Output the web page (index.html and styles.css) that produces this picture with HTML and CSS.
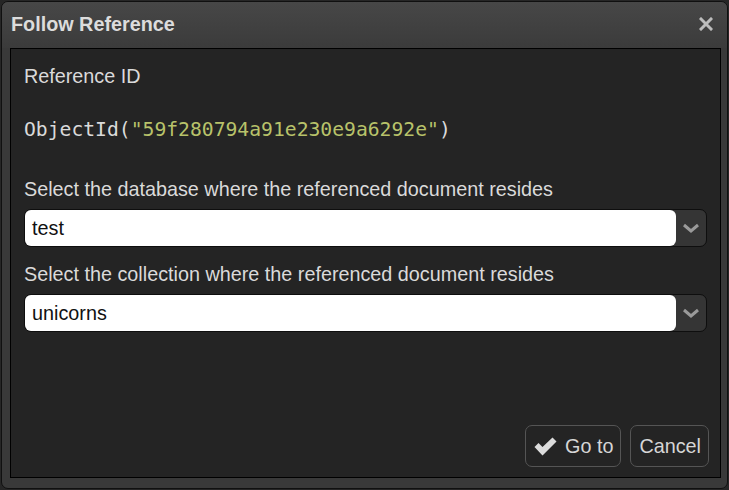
FILE: index.html
```html
<!DOCTYPE html>
<html lang="en">
<head>
    <meta charset="UTF-8">
    <title>Follow Reference</title>
    <link rel="stylesheet" href="styles.css">
</head>
<body>
    <div class="dialog">
        <div class="titlebar">
            <span class="title">Follow Reference</span>
            <svg class="close" width="14" height="14" viewBox="0 0 14 14">
                <path d="M2 2 L12 12 M12 2 L2 12" stroke="#bdbdbd" stroke-width="3" stroke-linecap="square"/>
            </svg>
        </div>
        <div class="panel">
            <div class="label">Reference ID</div>
            <div class="objectid">ObjectId(<span class="str">"59f280794a91e230e9a6292e"</span>)</div>

            <div class="label label-db">Select the database where the referenced document resides</div>
            <div class="select">
                <div class="select-value">test</div>
                <div class="select-arrow">
                    <svg width="18" height="10" viewBox="0 0 18 10"><polyline points="2,2 9,8 16,2" fill="none" stroke="#9a9a9a" stroke-width="3"/></svg>
                </div>
            </div>

            <div class="label label-coll">Select the collection where the referenced document resides</div>
            <div class="select">
                <div class="select-value">unicorns</div>
                <div class="select-arrow">
                    <svg width="18" height="10" viewBox="0 0 18 10"><polyline points="2,2 9,8 16,2" fill="none" stroke="#9a9a9a" stroke-width="3"/></svg>
                </div>
            </div>

            <div class="buttons">
                <button class="btn">
                    <svg width="23" height="19" viewBox="0 0 23 19"><path d="M0.5 10 L4.5 6 L8.5 10 L18.5 0.5 L22.5 4.5 L8.5 18.5 Z" fill="#dcdcdc"/></svg>
                    Go to
                </button>
                <button class="btn">Cancel</button>
            </div>
        </div>
    </div>
</body>
</html>
```

FILE: styles.css
```css
body {
    margin: 0;
    padding: 1px;
    background-color: #262626;
    font-family: "Liberation Sans", Arial, sans-serif;
}

.dialog {
    box-sizing: border-box;
    width: 727px;
    height: 488px;
    display: flex;
    flex-direction: column;
    border: 1px solid #101010;
    border-radius: 7px;
    background-color: #393939;
    overflow: hidden;
}

.titlebar {
    height: 46px;
    flex: none;
    display: flex;
    align-items: center;
    justify-content: space-between;
    padding: 0 14px 0 9px;
    background: linear-gradient(#474747, #3b3b3b);
}

.title {
    color: #dcdcdc;
    font-weight: bold;
    font-size: 19.8px;
    margin-top: -2px;
}

.close {
    margin-top: -2px;
}

.panel {
    flex: 1;
    display: flex;
    flex-direction: column;
    margin: 0 6px 10px 8px;
    padding: 16px 11px 10px 13px;
    border: 1px solid #000;
    background-color: #242424;
}

.label {
    color: #dadada;
    font-size: 19.8px;
    line-height: 22px;
}

.objectid {
    margin-top: 31px;
    color: #dadada;
    font-family: "DejaVu Sans Mono", monospace;
    font-size: 19.7px;
    line-height: 23px;
}

.objectid .str {
    color: #b8c26a;
}

.label-db {
    margin-top: 37px;
}

.label-coll {
    margin-top: 16px;
}

.select {
    box-sizing: border-box;
    height: 38px;
    margin: 9px 2px 0 0;
    display: flex;
    border: 1px solid #0e0e0e;
    border-radius: 7px;
    background-color: #353535;
}

.select-value {
    flex: 1;
    display: flex;
    align-items: center;
    padding-left: 7px;
    background-color: #fff;
    border-radius: 6px;
    color: #111;
    font-size: 19.8px;
}

.select-arrow {
    width: 30px;
    display: flex;
    align-items: center;
    justify-content: center;
}

.buttons {
    margin-top: auto;
    display: flex;
    justify-content: flex-end;
    gap: 9px;
}

.btn {
    height: 42px;
    display: flex;
    align-items: center;
    gap: 8px;
    padding: 0 7px 0 8px;
    border: 1px solid #555;
    border-radius: 7px;
    background-color: #242424;
    color: #d6d6d6;
    font-family: "Liberation Sans", Arial, sans-serif;
    font-size: 19.8px;
}
```
